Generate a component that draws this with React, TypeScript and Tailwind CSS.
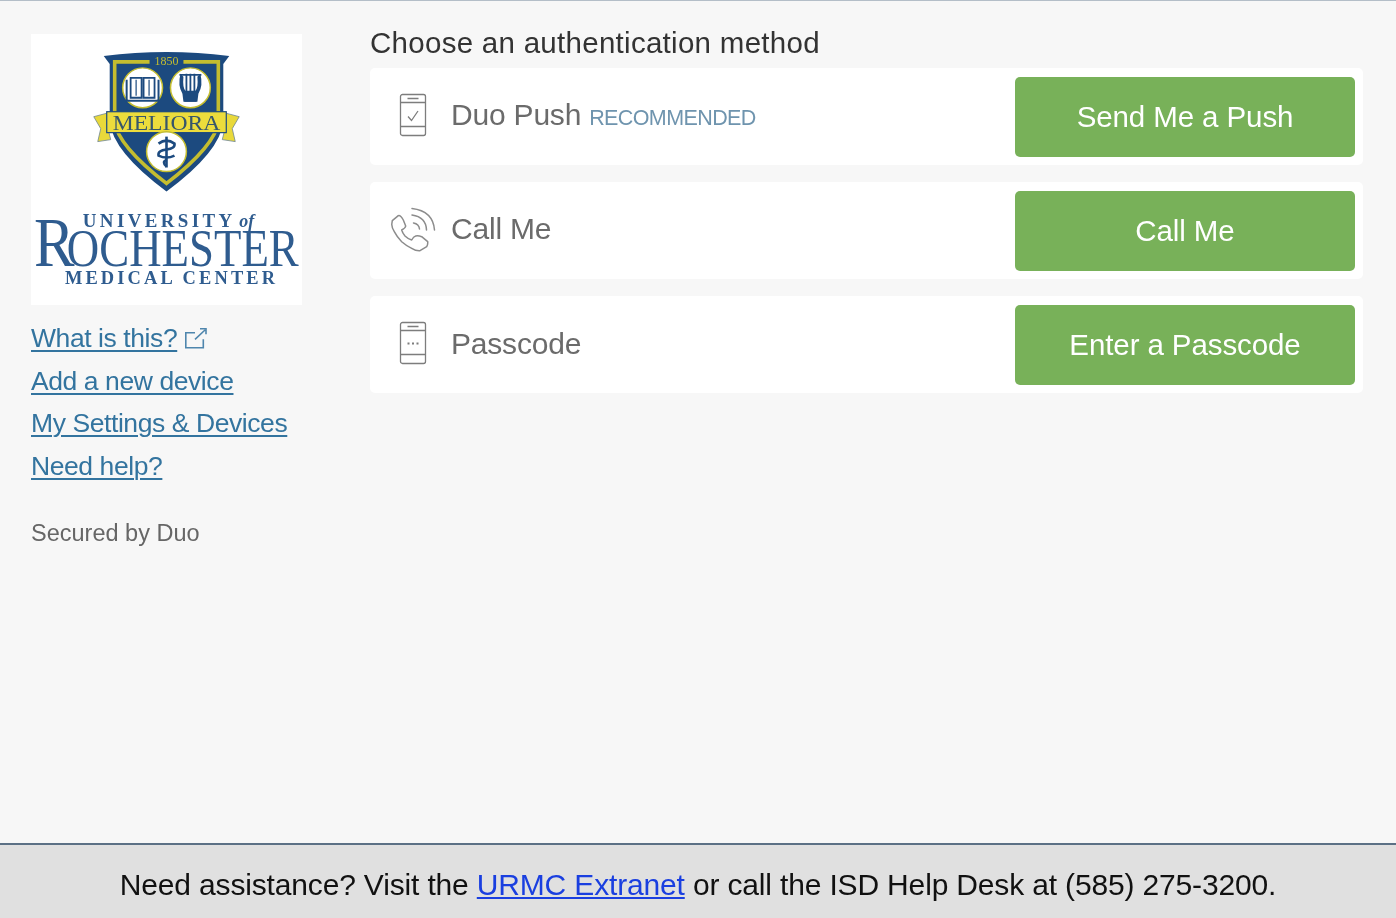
import React from "react";

function Logo() {
  const blue = "#1c4a7f";
  const wm = "#2f5c8f";
  const gold = "#c4bd2f";
  const serif = "'Liberation Serif', serif";
  return (
    <svg viewBox="0 0 272 272" className="w-full h-full block">
      {/* shield */}
      <path d="M73 22 Q136 14 199 22 L193 30 L193 88 Q190 118 136 158 Q82 118 79 88 L79 30 Z" fill={blue} />
      <path d="M84 28 H188 V88 Q185 112 136 150 Q87 112 84 88 Z" fill="none" stroke={gold} strokeWidth="3.6" />
      <rect x="119" y="20" width="34" height="12" fill={blue} />
      <text x="136" y="31" textAnchor="middle" fontSize="12" fontFamily={serif} fill={gold}>1850</text>
      {/* book medallion */}
      <circle cx="112" cy="54" r="20" fill="#fff" stroke={gold} strokeWidth="1.5" />
      <path d="M100 44 H111 V64 H100 Z M113 44 H124 V64 H113 Z" fill="none" stroke={blue} strokeWidth="1.8" />
      <path d="M96 46 V67 H128 V46" fill="none" stroke={blue} strokeWidth="2" />
      <path d="M105.500 46 V62 M118.500 46 V62" stroke={blue} strokeWidth="1.200" />
      {/* lyre medallion */}
      <circle cx="160" cy="54" r="20" fill="#fff" stroke={gold} strokeWidth="1.5" />
      <path d="M150 40 Q147 52 152 60 L153 68 H167 L168 60 Q173 52 170 40 L167 43 Q168 54 165 57 H155 Q152 54 153 43 Z" fill={blue} />
      <path d="M156 40 V58 M160 40 V58 M164 40 V58 M149 41 H171" stroke={blue} strokeWidth="1.800" />
      <rect x="154" y="58" width="12" height="10" fill={blue} />
      {/* banner */}
      <path d="M63 83 L78 79 L78 98 L80 106 L67 108 L70 95 Z" fill="#e9d93a" stroke="#6f8590" strokeWidth="0.8" />
      <path d="M209 83 L194 79 L194 98 L192 106 L205 108 L202 95 Z" fill="#e9d93a" stroke="#6f8590" strokeWidth="0.8" />
      <rect x="76" y="78" width="120" height="21" fill="#ecdc3c" stroke={blue} strokeWidth="1.2" />
      <text x="136" y="96" textAnchor="middle" fontSize="22" textLength="108" lengthAdjust="spacingAndGlyphs" fontFamily={serif} fill="#36566b">MELIORA</text>
      {/* caduceus medallion */}
      <circle cx="136" cy="118" r="20" fill="#fff" stroke={gold} strokeWidth="1.5" />
      <path d="M136 103 V134" stroke={blue} strokeWidth="2.6" />
      <path d="M128 110 Q136 104 144 110 Q145 115 136 116 Q127 117 128 122 Q136 126 144 122 M136 126 Q131 129 136 133" fill="none" stroke={blue} strokeWidth="2.6" />
      {/* wordmark */}
      <text x="52" y="194" fontSize="19" fontWeight="700" textLength="150" lengthAdjust="spacing" fontFamily={serif} fill={wm}>UNIVERSITY</text>
      <text x="209" y="194" fontSize="19" fontStyle="italic" fontWeight="700" textLength="15" lengthAdjust="spacingAndGlyphs" fontFamily={serif} fill={wm}>of</text>
      <text transform="translate(3 233) scale(0.86 1)" fontSize="71" fontFamily={serif} fill={wm}>R</text>
      <text transform="translate(36 233) scale(0.85 1)" fontSize="53" fontFamily={serif} fill={wm}>OCHESTER</text>
      <text x="34" y="251" fontSize="18.500" fontWeight="700" textLength="211" lengthAdjust="spacing" fontFamily={serif} fill={wm}>MEDICAL CENTER</text>
    </svg>
  );
}

function PhoneIcon({ kind }: { kind: "check" | "dots" }) {
  return (
    <svg width="28" height="44" viewBox="0 0 28 44" fill="none" stroke="#7d7d7d" strokeWidth="1.3">
      <rect x="1.500" y="1.500" width="25" height="41" rx="2" />
      <path d="M1.500 9.500 H26.500 M1.500 33.500 H26.500 M8.500 5.500 H19.500" />
      {kind === "check" ? (
        <path d="M9 23.500 L12.500 27.500 L19 18" />
      ) : (
        <path d="M8.500 22.500 H10.500 M13 22.500 H15 M17.500 22.500 H19.500" strokeWidth="1.8" />
      )}
    </svg>
  );
}

function CallIcon() {
  return (
    <svg width="45" height="45" viewBox="0 0 45 45" fill="none" stroke="#8c8c8c" strokeWidth="1.5" strokeLinecap="round" strokeLinejoin="round">
      <path d="M1.300 13.700 L7.300 8.700 Q9.500 8 12.300 13 L14.700 19 Q14.500 21 10.700 23 Q11.500 26 14 29 Q17 32 20.700 33 Q22.500 29.500 24.700 29 Q27.500 28.500 30.700 29.700 L36.700 34.700 Q37 37.500 35.700 39.700 L29 43.700 Q25 44 20.700 41.300 Q15 38.500 10.700 34.700 Q6 30 3.300 24.700 Q0.500 20 0.800 17 Z" />
      <path d="M21 1.500 Q42 4 43.500 23" />
      <path d="M21 8 Q35 10 35.500 23" />
      <path d="M22.500 16 Q28 17 28.500 22" />
    </svg>
  );
}

function ExternalIcon() {
  return (
    <svg width="22" height="22" viewBox="0 0 22 22" fill="none" stroke="#4f86ad" strokeWidth="1.6">
      <path d="M10 5.700 H0.800 V20.700 H18.300 V12.300" />
      <path d="M10 12.300 L20 3 M15 1.700 H21 V7.300" />
    </svg>
  );
}

const rowCls = "h-[97px] bg-white rounded-[5px] flex items-center pr-2 shrink-0";
const btnCls = "ml-auto w-[340px] h-[80px] pt-[2px] rounded-[5px] bg-[#78b159] text-white text-[29.5px] tracking-[-0.1px] flex items-center justify-center";
const linkCls = "text-[#33749f] underline underline-offset-[3px] decoration-[2px] text-[26.5px] leading-[42.5px] tracking-[-0.42px] w-fit";
const labelCls = "text-[#6b6b6b] text-[30px] tracking-[-0.2px]";

export default function App() {
  return (
    <div className="h-[918px] w-[1396px] overflow-hidden flex flex-col bg-[#f7f7f7] border-t border-[#b4bec8] font-['Liberation_Sans',Arial,sans-serif] [filter:blur(0.7px)]">
      <main className="flex-1 flex min-h-0">
        <aside className="w-[370px] shrink-0 pl-[31px] pt-[33px] flex flex-col">
          <div className="w-[271px] h-[271px] bg-white"><Logo /></div>
          <nav className="mt-[12px] flex flex-col">
            <div className="flex items-center gap-[8px]">
              <a className={linkCls}>What is this?</a>
              <ExternalIcon />
            </div>
            <a className={linkCls}>Add a new device</a>
            <a className={linkCls}>My Settings &amp; Devices</a>
            <a className={linkCls}>Need help?</a>
          </nav>
          <p className="mt-[31px] text-[23.5px] leading-[30px] text-[#666]">Secured by Duo</p>
        </aside>
        <section className="w-[993px] shrink-0 pt-[24px] flex flex-col">
          <h1 className="text-[29.5px] leading-[36px] tracking-[0.28px] text-[#333] mb-[7px]">Choose an authentication method</h1>
          <div className="flex flex-col gap-[17px]">
            <div className={rowCls}>
              <div className="w-[81px] pl-[29px] pb-[3px] shrink-0 flex"><PhoneIcon kind="check" /></div>
              <span className={`${labelCls} pb-[4px]`}>Duo Push</span>
              <span className="ml-[8px] mt-[3px] text-[#6f94ae] text-[21.5px] tracking-[-0.6px]">RECOMMENDED</span>
              <button className={btnCls}>Send Me a Push</button>
            </div>
            <div className={rowCls}>
              <div className="w-[81px] pl-[21px] pb-[3px] shrink-0 flex"><CallIcon /></div>
              <span className={`${labelCls} pb-[4px]`}>Call Me</span>
              <button className={btnCls}>Call Me</button>
            </div>
            <div className={rowCls}>
              <div className="w-[81px] pl-[29px] pb-[3px] shrink-0 flex"><PhoneIcon kind="dots" /></div>
              <span className={`${labelCls} pb-[2px]`}>Passcode</span>
              <button className={btnCls}>Enter a Passcode</button>
            </div>
          </div>
        </section>
      </main>
      <footer className="h-[75px] pt-[5px] shrink-0 bg-[#e0e0e0] border-t-2 border-[#5b7085] flex items-center justify-center text-[30px] tracking-[-0.16px] text-[#111]">
        <span>
          Need assistance? Visit the <a className="text-[#1a3fe0] underline underline-offset-[2px] decoration-[2px]">URMC Extranet</a> or call the ISD Help Desk at (585) 275-3200.
        </span>
      </footer>
    </div>
  );
}
